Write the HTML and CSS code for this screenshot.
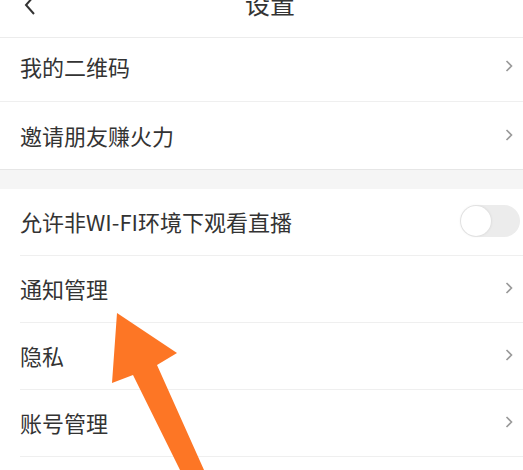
FILE: index.html
```html
<!DOCTYPE html>
<html lang="zh">
<head>
<meta charset="utf-8">
<link rel="stylesheet" href="styles.css">
</head>
<body>
<div class="page">
  <header class="header">
    <svg class="back" width="14" height="20" viewBox="0 0 14 20"><polyline points="11,-4 3,5 11,14" fill="none" stroke="#333" stroke-width="2"/></svg>
    <div class="title">设置</div>
  </header>
  <section class="group">
    <div class="row first"><span class="label">我的二维码</span><svg class="chev" width="8" height="12" viewBox="0 0 8 12"><polyline points="1.5,1 6.5,6 1.5,11" fill="none" stroke="#9a9a9a" stroke-width="1.6"/></svg></div>
    <div class="row last"><span class="label">邀请朋友赚火力</span><svg class="chev" width="8" height="12" viewBox="0 0 8 12"><polyline points="1.5,1 6.5,6 1.5,11" fill="none" stroke="#9a9a9a" stroke-width="1.6"/></svg></div>
  </section>
  <div class="gap"></div>
  <section class="group">
    <div class="row"><span class="label">允许非WI-FI环境下观看直播</span><span class="switch"><span class="knob"></span></span></div>
    <div class="row"><span class="label">通知管理</span><svg class="chev" width="8" height="12" viewBox="0 0 8 12"><polyline points="1.5,1 6.5,6 1.5,11" fill="none" stroke="#9a9a9a" stroke-width="1.6"/></svg></div>
    <div class="row"><span class="label">隐私</span><svg class="chev" width="8" height="12" viewBox="0 0 8 12"><polyline points="1.5,1 6.5,6 1.5,11" fill="none" stroke="#9a9a9a" stroke-width="1.6"/></svg></div>
    <div class="row"><span class="label">账号管理</span><svg class="chev" width="8" height="12" viewBox="0 0 8 12"><polyline points="1.5,1 6.5,6 1.5,11" fill="none" stroke="#9a9a9a" stroke-width="1.6"/></svg></div>
  </section>
  <svg class="arrow" width="523" height="470" viewBox="0 0 523 470">
    <polygon points="117,313 177,353 157,365 204,470 180,470 133,375 112,383" fill="#fd7625"/>
  </svg>
</div>
</body>
</html>
```
FILE: styles.css
```css
html, body {
  margin: 0;
  padding: 0;
  background: #fff;
}
body {
  font-family: "Noto Sans CJK SC", "Noto Sans", sans-serif;
  color: #333;
  overflow: hidden;
}
.page {
  position: relative;
  width: 523px;
  height: 470px;
  overflow: hidden;
}
.header {
  height: 37px;
  border-bottom: 1px solid #ececec;
  display: flex;
  justify-content: center;
  align-items: flex-start;
  position: relative;
}
.back {
  position: absolute;
  left: 23px;
  top: 0;
}
.title {
  font-size: 25px;
  line-height: 25px;
  margin-top: -9px;
  margin-left: 17px;
  color: #333;
}
.group {
  background: #fff;
}
.row {
  height: 64px;
  padding-bottom: 2px;
  margin-left: 20px;
  padding-right: 10px;
  display: flex;
  align-items: center;
  justify-content: space-between;
  border-bottom: 1px solid #efefef;
}
.row.first {
  height: 55px;
  padding-bottom: 8px;
  margin-left: 0;
  padding-left: 20px;
}
.row.last {
  height: 65px;
  border-bottom: 1px solid #e6e6e6;
  margin-left: 0;
  padding-left: 20px;
}
.label {
  font-size: 22px;
  line-height: 30px;
  color: #333;
}
.gap {
  height: 19px;
  background: #f5f5f5;
}
.switch {
  width: 60px;
  height: 32px;
  border-radius: 16px;
  background: #ececec;
  position: relative;
  margin-right: -7px;
}
.knob {
  position: absolute;
  left: 1px;
  top: 1px;
  width: 30px;
  height: 30px;
  border-radius: 50%;
  background: #fff;
  box-shadow: 0 0 3px rgba(0,0,0,0.12);
}
.arrow {
  position: absolute;
  left: 0;
  top: 0;
  pointer-events: none;
}
```
